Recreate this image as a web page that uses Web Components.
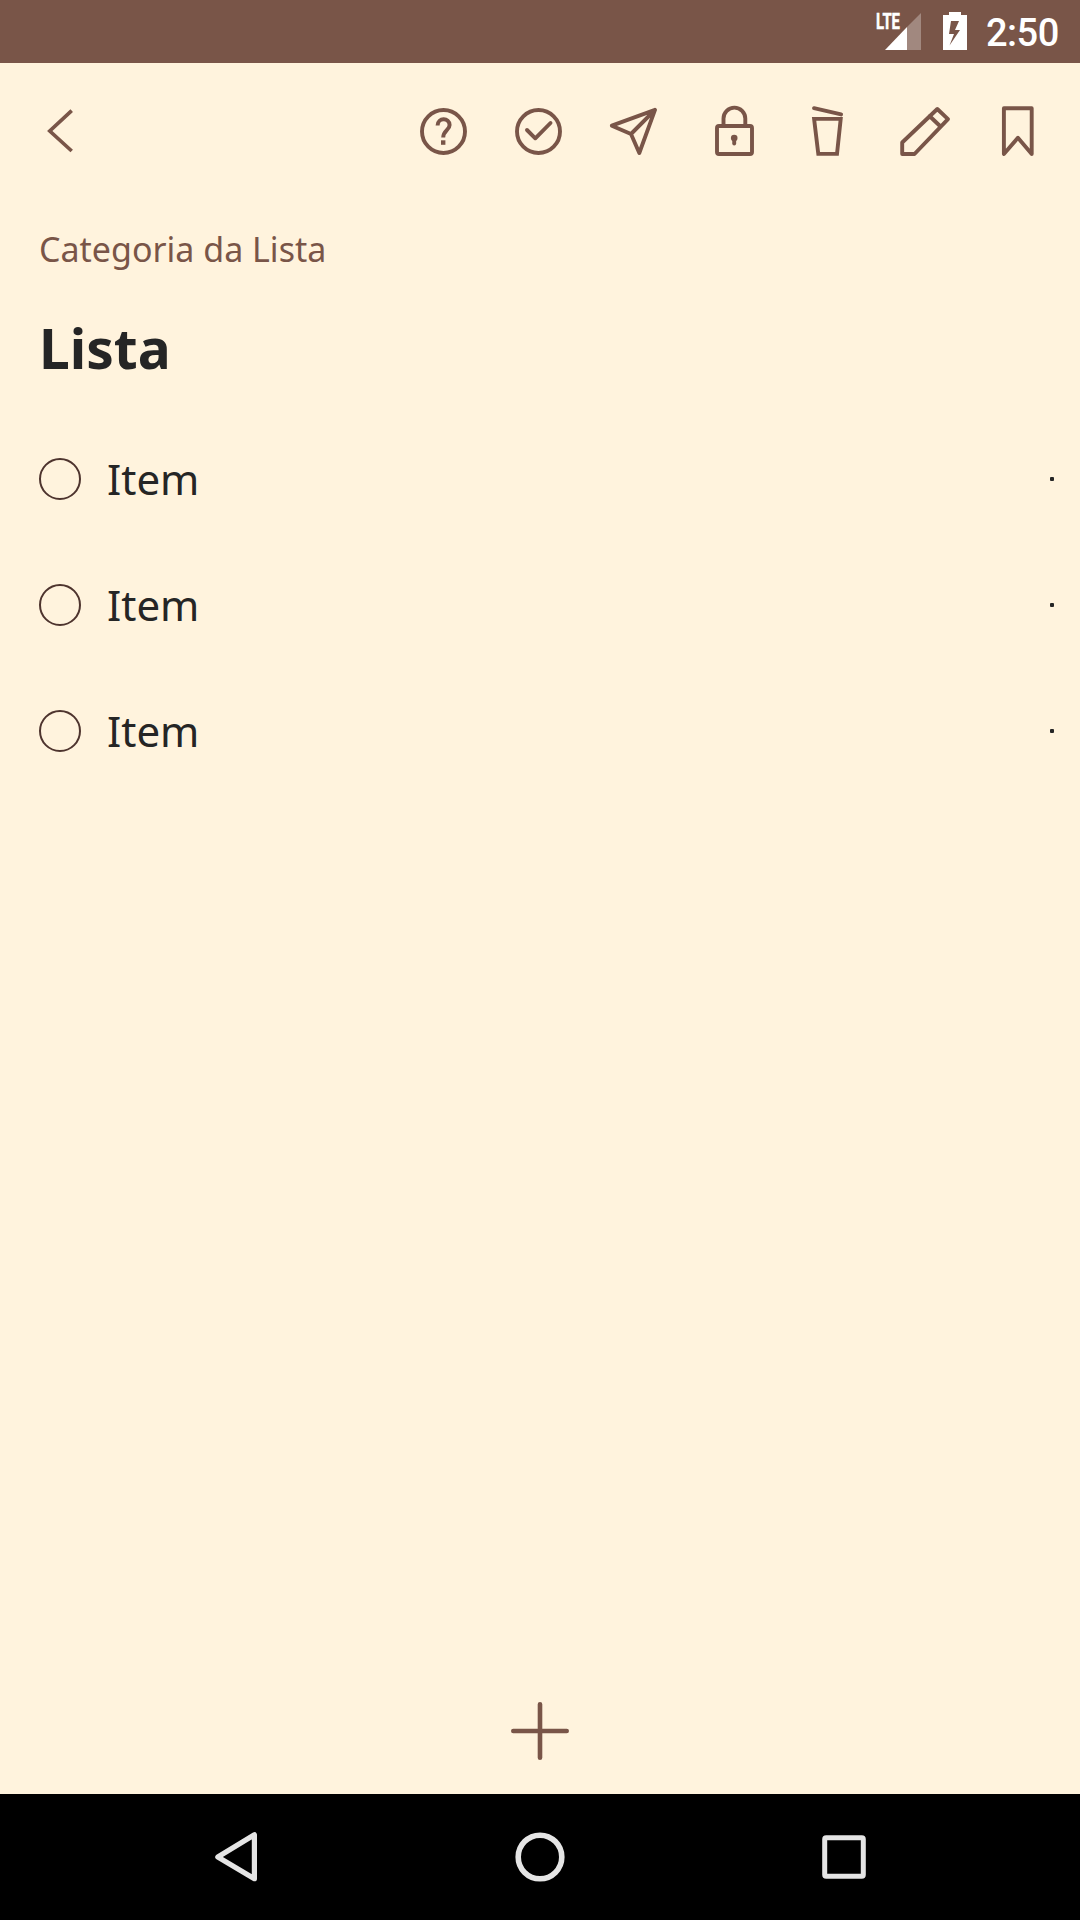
<!DOCTYPE html>
<html lang="pt">
<head>
<meta charset="utf-8">
<title>Lista</title>
<style>
html,body{margin:0;height:1920px;background:#fff3dd;overflow:hidden}
</style>
</head>
<body>
<list-app></list-app>
<script>
const define = (name, markup) => {
  const tpl = document.createElement('template');
  tpl.innerHTML = markup;
  customElements.define(name, class extends HTMLElement {
    constructor() {
      super();
      this.attachShadow({ mode: 'open' }).append(tpl.content.cloneNode(true));
    }
  });
};

define('status-bar', `
<style>
:host{display:flex;justify-content:flex-end;height:63px;background:#795548;color:#fff;padding-right:20px;font-family:Roboto,sans-serif}
svg{display:block}
time{width:74px;white-space:nowrap;font-size:38px;font-weight:500;letter-spacing:-.5px;line-height:63px;margin-left:18px;padding-top:2px;box-sizing:border-box}
</style>
<svg width="100" height="63" viewBox="868 0 100 63" fill="#fff">
  <path d="M921 13V50H907V27Z" opacity=".3"/>
  <path d="M907 27V50H885Z"/>
  <text x="876" y="29.200" font-size="22" font-weight="700" stroke="#fff" stroke-width=".5" textLength="24" lengthAdjust="spacingAndGlyphs">LTE</text>
  <path fill-rule="evenodd" d="M949 12H961V15H967V50H943V15H949ZM951 21L949 34H954L949.5 45.500L960 30H955L959 21Z"/>
</svg>
<time>2:50</time>
`);

const PATHS = {
  help: ['395', '<circle cx="443.500" cy="131.500" r="21.500"/><path d="M437.600 125.500C437.600 117.300 449.600 117.300 449.600 125C449.600 130 443.200 130.500 443.200 137.500" stroke-width="4" stroke-linecap="butt"/><path d="M441 140.300H445.400V144.800H441Z" fill="currentColor" stroke="none"/>'],
  done: ['491', '<circle cx="538.500" cy="131.500" r="21.500"/><path d="M527 130L535.300 138.300L550.500 123"/>'],
  send: ['587', '<path d="M655 109.900L611.800 125.700L631 134L639.300 153ZM631 134L655 109.900"/>'],
  lock: ['683', '<rect x="717" y="126" width="35" height="28" rx="2"/><path d="M723.500 126V118.500A10.900 10.900 0 0 1 745.300 118.500V126"/><circle cx="734.200" cy="138" r="3.300" fill="currentColor" stroke="none"/><path d="M734.200 139V143.500"/>'],
  trash: ['779', '<path d="M814.100 118.900H840.700L837 153.900H818.300Z" stroke-linejoin="miter"/><path d="M814 108.200L841.100 114.400"/>'],
  edit: ['875', '<path d="M902.200 154V142.500L937.300 109L948 119.200L914.500 154ZM929.500 116L940.500 126.500"/>'],
  mark: ['971', '<path d="M1003.900 108.200H1031.700V154L1017.900 137.800L1003.900 154Z"/>'],
};
customElements.define('tool-icon', class extends HTMLElement {
  connectedCallback() {
    const [x, shape] = PATHS[this.getAttribute('name')];
    this.attachShadow({ mode: 'open' }).innerHTML = `
<style>:host{display:block;width:96px;height:136px}svg{display:block}</style>
<svg width="96" height="136" viewBox="${x} 63 96 136" fill="none" stroke="currentColor" stroke-width="3.900" stroke-linecap="round" stroke-linejoin="round">${shape}</svg>`;
  }
});

define('tool-bar', `
<style>
:host{display:flex;justify-content:space-between;height:136px;padding:0 13px 0 30px;color:#795548}
svg{display:block}
nav{display:flex}
</style>
<svg width="60" height="136" viewBox="30 63 60 136" fill="none" stroke="currentColor" stroke-width="3.700"><path d="M71.700 110.700L49.800 131L71.700 151"/></svg>
<nav><slot></slot></nav>
`);

define('list-item', `
<style>
:host{display:flex;align-items:center;height:126px;padding:0 26px 0 39px;font-size:42px;line-height:126px;color:#252525}
i{box-sizing:border-box;width:42px;height:42px;border:2px solid #4e342e;border-radius:50%}
span{flex:1;margin-left:26px}
b{width:4px;height:4px;border-radius:1px;background:#252525}
</style>
<i></i><span><slot></slot></span><b></b>
`);

define('list-content', `
<style>
:host{display:flex;flex-direction:column;flex:1;padding-top:26px}
p{margin:0 39px;font-size:34px;line-height:48px;color:#795548}
h1{margin:37px 39px 30px;font-size:55px;line-height:76px;font-weight:700;color:#252525}
</style>
<p><slot name="category"></slot></p>
<h1><slot name="title"></slot></h1>
<slot></slot>
`);

define('add-button', `
<style>:host{display:flex;justify-content:center;height:126px}svg{display:block}</style>
<svg width="126" height="126" viewBox="-63 -63 126 126" stroke="#795548" stroke-width="4.600" stroke-linecap="round"><path d="M-26.700 0H26.700M0 -26.700V26.700"/></svg>
`);

define('nav-bar', `
<style>
:host{display:flex;justify-content:center;gap:184px;height:126px;background:#000}
svg{display:block}
</style>
<svg width="120" height="126" viewBox="176 1794 120 126" fill="none" stroke="#e5e5e5" stroke-width="5.200" stroke-linejoin="round"><path d="M254.400 1834.800V1878.700L217.800 1857Z"/></svg>
<svg width="120" height="126" viewBox="480 1794 120 126" fill="none" stroke="#e5e5e5" stroke-width="5.600"><circle cx="540" cy="1857" r="21.800"/></svg>
<svg width="120" height="126" viewBox="784 1794 120 126" fill="none" stroke="#e5e5e5" stroke-width="5"><rect x="824.700" y="1837.700" width="38.600" height="38.600" rx="1.500"/></svg>
`);

define('list-app', `
<style>
:host{display:flex;flex-direction:column;width:1080px;height:1920px;background:#fff3dd;font-family:"Noto Sans",sans-serif}
</style>
<status-bar></status-bar>
<tool-bar>
  <tool-icon name="help"></tool-icon><tool-icon name="done"></tool-icon><tool-icon name="send"></tool-icon><tool-icon name="lock"></tool-icon><tool-icon name="trash"></tool-icon><tool-icon name="edit"></tool-icon><tool-icon name="mark"></tool-icon>
</tool-bar>
<list-content>
  <span slot="category">Categoria da Lista</span>
  <span slot="title">Lista</span>
  <list-item>Item</list-item>
  <list-item>Item</list-item>
  <list-item>Item</list-item>
</list-content>
<add-button></add-button>
<nav-bar></nav-bar>
`);
</script>
</body>
</html>
